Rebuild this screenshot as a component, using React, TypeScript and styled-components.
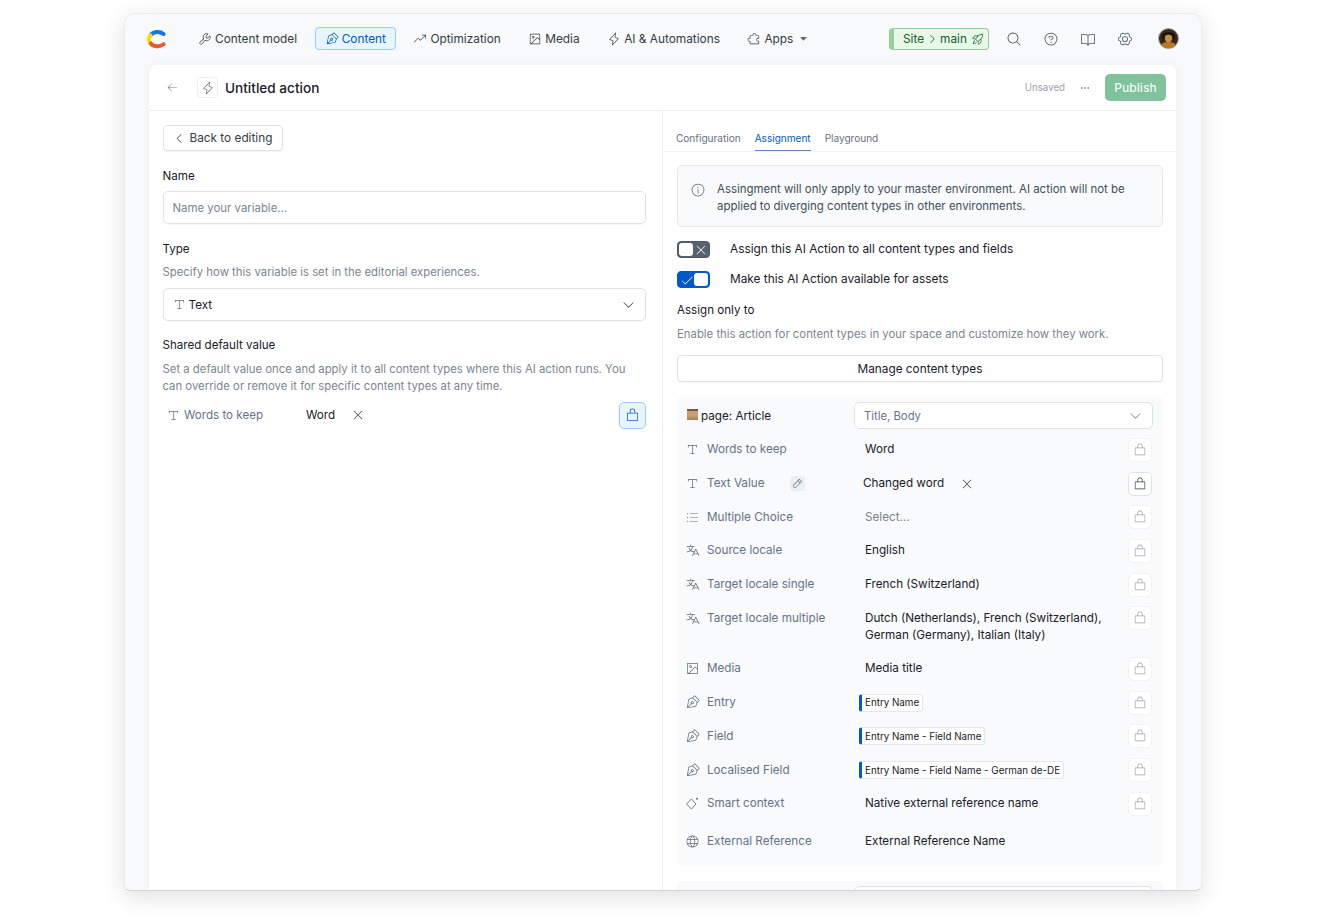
import styled, { createGlobalStyle } from 'styled-components';
import {
  PiArrowLeftLight, PiBookOpenLight, PiCaretDownFill, PiCaretDownLight, PiCaretLeftLight, PiCaretRightLight,
  PiCheckLight, PiDotsThreeBold, PiGearSixLight, PiGlobeLight, PiImageSquareLight, PiInfoLight, PiLightningLight,
  PiListBulletsLight, PiLockSimpleLight, PiMagnifyingGlassLight, PiPenNibLight, PiPencilSimpleLight,
  PiPuzzlePieceLight, PiQuestionLight, PiRocketLaunchLight, PiTextTLight, PiTranslateLight, PiTrendUpLight,
  PiWrenchLight, PiXLight,
} from 'react-icons/pi';
import type { ReactNode } from 'react';

const Global = createGlobalStyle`
html, body { margin: 0; padding: 0; background: #fff; }
body { font-family: Inter, "Liberation Sans", sans-serif; color: #1a202b; font-size: 12px; }
* { box-sizing: border-box; }
`

const Page = styled.div`
width: 1320px;
height: 920px;
padding: 13px 118px 29px 124px;
overflow: hidden;
`

const Window = styled.div`
height: 878px;
display: flex;
flex-direction: column;
background: #f7f9fb;
border: 1px solid #ebedef;
border-bottom-color: #d3d5d7;
border-radius: 10px 10px 6px 6px;
box-shadow: 0 6px 22px rgba(25, 37, 50, 0.14);
overflow: hidden;
`

const Nav = styled.nav`
height: 51px;
flex: none;
display: flex;
align-items: center;
padding: 0 22px 2px;
`

const Logo = styled.svg`
width: 20px;
height: 20px;
margin-right: 21px;
flex: none;
`

const NavItem = styled.div<{ $active?: boolean }>`
height: 23px;
display: flex;
align-items: center;
gap: 3px;
padding: 0 9px;
margin-right: 7.5px;
border-radius: 4px;
border: 1px solid ${p => (p.$active ? '#98cbff' : 'transparent')};
background: ${p => (p.$active ? '#e8f5ff' : 'transparent')};
color: ${p => (p.$active ? '#0059c8' : '#333c47')};
font-size: 11.85px;
white-space: nowrap;
svg { font-size: 14px; flex: none; }
`

const AppsCaret = styled(PiCaretDownFill)`
&& { font-size: 9px; margin-left: 3px; color: #5a6571; }
`

const NavRight = styled.div`
margin-left: auto;
display: flex;
align-items: center;
`

const SitePill = styled.div`
width: 100px;
height: 22px;
display: flex;
align-items: center;
gap: 2px;
padding-left: 9px;
margin-right: 6px;
border: 1px solid #93c9a4;
border-left: 5px solid #93cf9f;
border-radius: 4px;
background: #e7f8e6;
color: #1a5c34;
font-size: 11.8px;
white-space: nowrap;
svg { font-size: 12px; flex: none; }
`

const Rocket = styled(PiRocketLaunchLight)`
&& { font-size: 14px; margin-left: 2px; }
`

const NavIcon = styled.div`
width: 37px;
display: flex;
justify-content: center;
color: #414d5a;
font-size: 16px;
`

const Avatar = styled.svg`
width: 21px;
height: 21px;
margin-left: 15px;
flex: none;
`

const Card = styled.main`
flex: 1;
min-height: 0;
margin: 0 25px 0 24px;
display: flex;
flex-direction: column;
background: #fff;
border-radius: 8px 8px 0 0;
box-shadow: 0 0 8px rgba(25, 37, 50, 0.05);
`

const CardHeader = styled.header`
height: 46px;
flex: none;
display: flex;
align-items: center;
padding: 0 10px 0 17px;
border-bottom: 1px solid #eceff1;
`

const BackArrow = styled.div`
display: flex;
color: #77818c;
font-size: 13px;
margin-right: 18px;
`

const ActionChip = styled.div`
width: 21px;
height: 21px;
display: flex;
align-items: center;
justify-content: center;
border: 1px solid #eceff1;
border-radius: 4px;
color: #5a6571;
font-size: 14px;
margin-right: 7px;
`

const Title = styled.h1`
margin: 0;
font-size: 13.6px;
font-weight: 500;
color: #1a202b;
`

const Unsaved = styled.span`
margin-left: auto;
color: #9aa2ab;
font-size: 9.7px;
`

const Dots = styled.div`
display: flex;
margin: 0 14px 0 14px;
font-size: 12px;
color: #414d5a;
`

const Publish = styled.button`
width: 61px;
height: 27px;
padding: 0;
border: none;
border-radius: 5px;
background: #7fc29b;
color: #f1f9f4;
font: 500 12.1px Inter, sans-serif;
`

const Panes = styled.div`
flex: 1;
min-height: 0;
display: grid;
grid-template-columns: 514px 1fr;
overflow: hidden;
`

const LeftPane = styled.section`
padding: 14px 16px 0 13.5px;
border-right: 1px solid #eceff1;
`

const BackButton = styled.div`
width: 120px;
height: 26px;
display: flex;
align-items: center;
gap: 4px;
padding-left: 9px;
border: 1px solid #dfe3e7;
border-radius: 4px;
box-shadow: 0 1px 1px rgba(25, 37, 50, 0.05);
font-size: 11.8px;
color: #333c47;
svg { font-size: 13px; }
`

const Label = styled.div<{ $top: number }>`
margin-top: ${p => p.$top}px;
line-height: 17px;
font-size: 11.6px;
color: #1a202b;
`

const Help = styled.p<{ $top: number }>`
margin: ${p => p.$top}px 0 0;
line-height: 17px;
font-size: 11.35px;
color: #7b858f;
`

const Field = styled.div<{ $top: number }>`
height: 33px;
margin-top: ${p => p.$top}px;
display: flex;
align-items: center;
gap: 2px;
padding: 0 9px;
border: 1px solid #dfe3e7;
border-radius: 5px;
box-shadow: 0 1px 1px rgba(25, 37, 50, 0.04);
color: #1a202b;
font-size: 11.7px;
svg { font-size: 15px; }
`

const TypeIcon = styled(PiTextTLight)`
margin-left: -1px;
color: #67728a;
flex: none;
`

const Muted = styled.span`
color: #7b858f;
font-size: 11.4px;
`

const Grow = styled.span`
flex: 1;
`

const DefaultRow = styled.div`
height: 26px;
margin-top: 7px;
display: flex;
align-items: center;
padding-left: 3px;
font-size: 11.6px;
svg:first-child { font-size: 15px; margin-left: 0; }
`

const DefaultName = styled.span`
width: 122px;
color: #67728a;
margin-left: 3.5px;
`

const LockButton = styled.div<{ $state?: 'on' | 'blue' }>`
width: 24px;
height: 24px;
flex: none;
display: flex;
align-items: center;
justify-content: center;
border-radius: 5px;
background: ${p => (p.$state === 'blue' ? '#e8f5ff' : '#fff')};
border: 1px solid ${p => (p.$state === 'blue' ? '#98cbff' : p.$state === 'on' ? '#dfe3e7' : '#f1f3f5')};
color: ${p => (p.$state === 'blue' ? '#0059c8' : p.$state === 'on' ? '#333c47' : '#98a2ad')};
font-size: 14px;
`

const BlueLock = styled(LockButton)`
width: 27px;
height: 27px;
margin-left: auto;
font-size: 15px;
`

const RowX = styled(PiXLight)`
font-size: 14px;
margin-left: 16px;
color: #333c47;
flex: none;
`

const RightPane = styled.section`
overflow: hidden;
`

const Tabs = styled.div`
height: 41px;
display: flex;
gap: 14px;
padding: 14px 0 0 13px;
border-bottom: 1px solid #f1f3f5;
`

const Tab = styled.div<{ $active?: boolean }>`
height: 26px;
font-size: 10.05px;
line-height: 26px;
color: ${p => (p.$active ? '#0059c8' : '#67728a')};
border-bottom: 1px solid ${p => (p.$active ? '#5f84c9' : 'transparent')};
`

const RightBody = styled.div`
padding: 13px 13px 0 14px;
`

const Info = styled.div`
height: 62px;
display: grid;
grid-template-columns: 27px 1fr;
align-items: start;
padding: 14.5px 12px;
background: #f8fafc;
border: 1px solid #e4e8eb;
border-radius: 5px;
line-height: 17px;
font-size: 11.45px;
color: #414d5a;
svg { font-size: 16px; color: #5a6571; margin-top: 1px; }
`

const ToggleRow = styled.div<{ $top: number }>`
display: flex;
align-items: center;
gap: 20px;
margin-top: ${p => p.$top}px;
line-height: 16px;
font-size: 11.85px;
color: #1a202b;
`

const ToggleText = styled.span`
padding-bottom: 1px;
`

const Toggle = styled.div<{ $on?: boolean }>`
width: 33px;
height: 17px;
display: flex;
flex-direction: ${p => (p.$on ? 'row-reverse' : 'row')};
align-items: center;
padding: 1px;
border: 1px solid ${p => (p.$on ? '#0059c8' : '#4e5a68')};
border-radius: 4px;
background: ${p => (p.$on ? '#0059c8' : '#566271')};
color: #fff;
font-size: 14px;
`

const Knob = styled.span`
width: 14px;
height: 13px;
flex: none;
border-radius: 3px;
background: #fff;
`

const Mark = styled.span`
flex: 1;
display: flex;
justify-content: center;
`

const ManageButton = styled.div`
height: 27px;
margin-top: 12.5px;
display: flex;
align-items: center;
justify-content: center;
border: 1px solid #dfe3e7;
border-radius: 4px;
box-shadow: 0 1px 1px rgba(25, 37, 50, 0.05);
font-size: 11.8px;
color: #1a202b;
`

const Group = styled.div`
margin-top: 15px;
padding: 5px 10px 8px;
background: #f8fafc;
border-radius: 5px;
`

const GroupHead = styled.div`
display: grid;
grid-template-columns: 167px 1fr;
align-items: center;
height: 27px;
margin-bottom: 4px;
font-size: 11.7px;
`

const PageName = styled.div`
display: flex;
align-items: center;
gap: 3px;
color: #1a202b;
`

const Swatch = styled.span`
width: 11px;
height: 11px;
background: linear-gradient(#7b5a38 0 20%, #c89f74 20% 60%, #a77d52);
margin-top: -3px;
`

const FieldsSelect = styled.div`
height: 27px;
display: flex;
align-items: center;
justify-content: space-between;
padding: 0 9px 0 9px;
background: #fff;
border: 1px solid #dfe3e7;
border-radius: 5px;
color: #67728a;
font-size: 11.3px;
svg { font-size: 15px; }
`

const Row = styled.div<{ $top?: number }>`
display: grid;
grid-template-columns: 20px 147px 1fr 24px;
align-items: start;
padding: 8.35px 0;
margin-top: ${p => p.$top ?? 0}px;
line-height: 17px;
font-size: 11.7px;
`

const RowIcon = styled.div`
height: 17px;
margin-left: -2px;
display: flex;
align-items: center;
color: #5f6a7a;
font-size: 15px;
`

const RowLabel = styled.div`
display: flex;
align-items: center;
color: #67728a;
`

const PenChip = styled.span`
width: 15px;
height: 15px;
margin-left: 25px;
display: flex;
align-items: center;
justify-content: center;
border-radius: 3px;
background: #eceff1;
color: #414d5a;
font-size: 11px;
`

const RowValue = styled.div<{ $muted?: boolean }>`
padding-left: 11px;
padding-right: 20px;
color: ${p => (p.$muted ? '#7b858f' : '#1a202b')};
`

const ChangedValue = styled.div`
display: flex;
align-items: center;
padding-left: 9px;
color: #1a202b;
`

const ValueCell = styled.div`
padding-left: 5px;
display: flex;
height: 17px;
align-items: center;
`

const EntryChip = styled.span`
height: 18px;
display: inline-flex;
align-items: center;
padding: 0 3px 0 3px;
background: #fff;
border: 1px solid #e4e8eb;
border-left: 3px solid #0059c8;
border-radius: 3px;
font-size: 9.8px;
color: #1a202b;
white-space: nowrap;
`

const SlotLock = styled.div`
margin: -3.5px 0 -3.5px -1px;
`

const SmartIcon = () =>
  <svg width="15" height="15" viewBox="0 0 14 14" fill="none" stroke="currentColor" strokeWidth="0.8">
    <path d="M6 2.8 10.2 7.5 6 12.2 1.5 7.5Z" strokeLinejoin="round" />
    <circle cx="11.2" cy="2.6" r="0.9" fill="currentColor" stroke="none" />
  </svg>

type FieldRow = { icon: ReactNode; label: string; value?: string; muted?: boolean; chip?: string };

const afterChanged: FieldRow[] = [
  { icon: <PiListBulletsLight />, label: 'Multiple Choice', value: 'Select...', muted: true },
  { icon: <PiTranslateLight />, label: 'Source locale', value: 'English' },
  { icon: <PiTranslateLight />, label: 'Target locale single', value: 'French (Switzerland)' },
  { icon: <PiTranslateLight />, label: 'Target locale multiple', value: 'Dutch (Netherlands), French (Switzerland), German (Germany), Italian (Italy)' },
  { icon: <PiImageSquareLight />, label: 'Media', value: 'Media title' },
  { icon: <PiPenNibLight />, label: 'Entry', chip: 'Entry Name' },
  { icon: <PiPenNibLight />, label: 'Field', chip: 'Entry Name - Field Name' },
  { icon: <PiPenNibLight />, label: 'Localised Field', chip: 'Entry Name - Field Name - German de-DE' },
  { icon: <SmartIcon />, label: 'Smart context', value: 'Native external reference name' },
];

const FieldLine = ({ row }: { row: FieldRow }) =>
  <Row>
    <RowIcon>{row.icon}</RowIcon>
    <RowLabel>{row.label}</RowLabel>
    {row.chip
      ? <ValueCell><EntryChip>{row.chip}</EntryChip></ValueCell>
      : <RowValue $muted={row.muted}>{row.value}</RowValue>}
    <SlotLock><LockButton><PiLockSimpleLight /></LockButton></SlotLock>
  </Row>

const App = () =>
  <Page>
    <Global />
    <Window>
      <Nav>
        <Logo viewBox="0 0 20 20" fill="none" strokeWidth="4" strokeLinecap="round">
          <path d="M3.6 6.2C6.2 2.6 12.5 1.8 16.6 5" stroke="#1773eb" />
          <path d="M3.4 6.4C1.6 8.6 1.6 12 3.4 14" stroke="#ffda00" />
          <path d="M3.8 14.4C6.4 17.6 12.6 18.4 16.6 15.2" stroke="#eb5a29" />
        </Logo>
        <NavItem><PiWrenchLight />Content model</NavItem>
        <NavItem $active><PiPenNibLight />Content</NavItem>
        <NavItem><PiTrendUpLight />Optimization</NavItem>
        <NavItem><PiImageSquareLight />Media</NavItem>
        <NavItem><PiLightningLight />AI &amp; Automations</NavItem>
        <NavItem><PiPuzzlePieceLight />Apps<AppsCaret /></NavItem>
        <NavRight>
          <SitePill>Site<PiCaretRightLight />main<Rocket /></SitePill>
          <NavIcon><PiMagnifyingGlassLight /></NavIcon>
          <NavIcon><PiQuestionLight /></NavIcon>
          <NavIcon><PiBookOpenLight /></NavIcon>
          <NavIcon><PiGearSixLight /></NavIcon>
          <Avatar viewBox="0 0 21 21">
            <circle cx="10.5" cy="10.5" r="10" fill="#3b2a1c" stroke="#a9adb1" strokeWidth="1" />
            <ellipse cx="10.5" cy="10" rx="3.6" ry="4.6" fill="#c98c4c" />
            <path d="M3 17C5 13 16 13 18 17L14 20H7Z" fill="#b97a24" />
            <path d="M4 8C5 3 16 3 17 8L16 14 14.5 8C12 6 9 6 6.5 8L5 14Z" fill="#191007" />
          </Avatar>
        </NavRight>
      </Nav>
      <Card>
        <CardHeader>
          <BackArrow><PiArrowLeftLight /></BackArrow>
          <ActionChip><PiLightningLight /></ActionChip>
          <Title>Untitled action</Title>
          <Unsaved>Unsaved</Unsaved>
          <Dots><PiDotsThreeBold /></Dots>
          <Publish>Publish</Publish>
        </CardHeader>
        <Panes>
          <LeftPane>
            <BackButton><PiCaretLeftLight />Back to editing</BackButton>
            <Label $top={17}>Name</Label>
            <Field $top={6}><Muted>Name your variable…</Muted></Field>
            <Label $top={17}>Type</Label>
            <Help $top={6}>Specify how this variable is set in the editorial experiences.</Help>
            <Field $top={7}><TypeIcon />Text<Grow /><PiCaretDownLight /></Field>
            <Label $top={16}>Shared default value</Label>
            <Help $top={7}>Set a default value once and apply it to all content types where this AI action runs. You can override or remove it for specific content types at any time.</Help>
            <DefaultRow>
              <TypeIcon />
              <DefaultName>Words to keep</DefaultName>
              Word
              <RowX />
              <BlueLock $state="blue"><PiLockSimpleLight /></BlueLock>
            </DefaultRow>
          </LeftPane>
          <RightPane>
            <Tabs>
              <Tab>Configuration</Tab>
              <Tab $active>Assignment</Tab>
              <Tab>Playground</Tab>
            </Tabs>
            <RightBody>
              <Info>
                <PiInfoLight />
                Assingment will only apply to your master environment. AI action will not be applied to diverging content types in other environments.
              </Info>
              <ToggleRow $top={14}>
                <Toggle><Knob /><Mark><PiXLight /></Mark></Toggle>
                <ToggleText>Assign this AI Action to all content types and fields</ToggleText>
              </ToggleRow>
              <ToggleRow $top={13}>
                <Toggle $on><Knob /><Mark><PiCheckLight /></Mark></Toggle>
                <ToggleText>Make this AI Action available for assets</ToggleText>
              </ToggleRow>
              <Label $top={14}>Assign only to</Label>
              <Help $top={6.5}>Enable this action for content types in your space and customize how they work.</Help>
              <ManageButton>Manage content types</ManageButton>
              <Group>
                <GroupHead>
                  <PageName><Swatch />page: Article</PageName>
                  <FieldsSelect>Title, Body<PiCaretDownLight /></FieldsSelect>
                </GroupHead>
                <FieldLine row={{ icon: <PiTextTLight />, label: 'Words to keep', value: 'Word' }} />
                <Row>
                  <RowIcon><PiTextTLight /></RowIcon>
                  <RowLabel>Text Value<PenChip><PiPencilSimpleLight /></PenChip></RowLabel>
                  <ChangedValue>Changed word<RowX /></ChangedValue>
                  <SlotLock><LockButton $state="on"><PiLockSimpleLight /></LockButton></SlotLock>
                </Row>
                {afterChanged.map(row => <FieldLine key={row.label} row={row} />)}
                <Row $top={4}>
                  <RowIcon><PiGlobeLight /></RowIcon>
                  <RowLabel>External Reference</RowLabel>
                  <RowValue>External Reference Name</RowValue>
                </Row>
              </Group>
              <Group>
                <GroupHead>
                  <span />
                  <FieldsSelect />
                </GroupHead>
              </Group>
            </RightBody>
          </RightPane>
        </Panes>
      </Card>
    </Window>
  </Page>

export default App;
